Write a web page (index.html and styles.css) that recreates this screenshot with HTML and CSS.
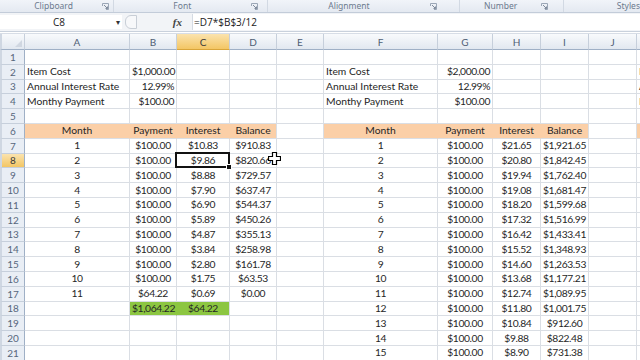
FILE: index.html
```html
<!DOCTYPE html>
<html lang="en">
<head>
    <meta charset="UTF-8">
    <meta name="viewport" content="width=device-width, initial-scale=1.0">
    <title>Loan Payments</title>
    <link rel="stylesheet" href="styles.css">
</head>
<body>
    <!-- Nombres de los grupos de la cinta -->
    <div class="ribbon-groups">
        <div class="group group-clipboard"><span class="group-label">Clipboard</span><svg class="launcher" viewBox="0 0 7 7"><path d="M0.5 3V0.5H6.5V6.5H4" fill="none" stroke="#9aa6b6"/><path d="M2 2L5.5 5.5M5.5 3.5V5.5H3.5" fill="none" stroke="#7f8b9c"/></svg></div>
        <div class="group group-font"><span class="group-label">Font</span><svg class="launcher" viewBox="0 0 7 7"><path d="M0.5 3V0.5H6.5V6.5H4" fill="none" stroke="#9aa6b6"/><path d="M2 2L5.5 5.5M5.5 3.5V5.5H3.5" fill="none" stroke="#7f8b9c"/></svg></div>
        <div class="group group-alignment"><span class="group-label">Alignment</span><svg class="launcher" viewBox="0 0 7 7"><path d="M0.5 3V0.5H6.5V6.5H4" fill="none" stroke="#9aa6b6"/><path d="M2 2L5.5 5.5M5.5 3.5V5.5H3.5" fill="none" stroke="#7f8b9c"/></svg></div>
        <div class="group group-number"><span class="group-label">Number</span><svg class="launcher" viewBox="0 0 7 7"><path d="M0.5 3V0.5H6.5V6.5H4" fill="none" stroke="#9aa6b6"/><path d="M2 2L5.5 5.5M5.5 3.5V5.5H3.5" fill="none" stroke="#7f8b9c"/></svg></div>
        <div class="group group-styles"><span class="group-label">Styles</span></div>
    </div>

    <!-- Barra de fórmulas -->
    <div class="formula-bar">
        <div class="name-box">C8<span class="name-drop">&#9662;</span></div>
        <div class="splitter"></div>
        <div class="fx">fx</div>
        <div class="formula">=D7*$B$3/12</div>
    </div>

    <!-- Hoja de cálculo -->
    <div class="sheet">
        <table class="grid">
            <colgroup>
                <col class="c-row"><col class="c-a"><col class="c-b"><col class="c-c"><col class="c-d"><col class="c-e">
                <col class="c-f"><col class="c-g"><col class="c-h"><col class="c-i"><col class="c-j"><col class="c-k">
            </colgroup>
            <thead>
                <tr>
                    <th class="corner"></th><th>A</th><th>B</th><th class="sel">C</th><th>D</th><th>E</th>
                    <th>F</th><th>G</th><th>H</th><th>I</th><th>J</th><th>K</th>
                </tr>
            </thead>
            <tbody>
                <tr><th>1</th><td></td><td></td><td></td><td></td><td></td><td></td><td></td><td></td><td></td><td></td><td></td></tr>
                <tr><th>2</th><td class="left">Item Cost</td><td class="right">$1,000.00</td><td></td><td></td><td></td><td class="left">Item Cost</td><td class="right">$2,000.00</td><td></td><td></td><td></td><td class="left">Item</td></tr>
                <tr><th>3</th><td class="left">Annual Interest Rate</td><td class="right">12.99%</td><td></td><td></td><td></td><td class="left">Annual Interest Rate</td><td class="right">12.99%</td><td></td><td></td><td></td><td class="left">Annual</td></tr>
                <tr><th>4</th><td class="left">Monthy Payment</td><td class="right">$100.00</td><td></td><td></td><td></td><td class="left">Monthy Payment</td><td class="right">$100.00</td><td></td><td></td><td></td><td class="left">Monthy</td></tr>
                <tr><th>5</th><td></td><td></td><td></td><td></td><td></td><td></td><td></td><td></td><td></td><td></td><td></td></tr>
                <tr class="titles"><th>6</th><td class="orange">Month</td><td class="orange">Payment</td><td class="orange">Interest</td><td class="orange end">Balance</td><td></td><td class="orange">Month</td><td class="orange">Payment</td><td class="orange">Interest</td><td class="orange end">Balance</td><td></td><td class="orange"></td></tr>
                <tr><th>7</th><td>1</td><td>$100.00</td><td>$10.83</td><td>$910.83</td><td></td><td>1</td><td>$100.00</td><td>$21.65</td><td>$1,921.65</td><td></td><td></td></tr>
                <tr><th class="sel">8</th><td>2</td><td>$100.00</td><td class="active">$9.86</td><td>$820.66</td><td></td><td>2</td><td>$100.00</td><td>$20.80</td><td>$1,842.45</td><td></td><td></td></tr>
                <tr><th>9</th><td>3</td><td>$100.00</td><td>$8.88</td><td>$729.57</td><td></td><td>3</td><td>$100.00</td><td>$19.94</td><td>$1,762.40</td><td></td><td></td></tr>
                <tr><th>10</th><td>4</td><td>$100.00</td><td>$7.90</td><td>$637.47</td><td></td><td>4</td><td>$100.00</td><td>$19.08</td><td>$1,681.47</td><td></td><td></td></tr>
                <tr><th>11</th><td>5</td><td>$100.00</td><td>$6.90</td><td>$544.37</td><td></td><td>5</td><td>$100.00</td><td>$18.20</td><td>$1,599.68</td><td></td><td></td></tr>
                <tr><th>12</th><td>6</td><td>$100.00</td><td>$5.89</td><td>$450.26</td><td></td><td>6</td><td>$100.00</td><td>$17.32</td><td>$1,516.99</td><td></td><td></td></tr>
                <tr><th>13</th><td>7</td><td>$100.00</td><td>$4.87</td><td>$355.13</td><td></td><td>7</td><td>$100.00</td><td>$16.42</td><td>$1,433.41</td><td></td><td></td></tr>
                <tr><th>14</th><td>8</td><td>$100.00</td><td>$3.84</td><td>$258.98</td><td></td><td>8</td><td>$100.00</td><td>$15.52</td><td>$1,348.93</td><td></td><td></td></tr>
                <tr><th>15</th><td>9</td><td>$100.00</td><td>$2.80</td><td>$161.78</td><td></td><td>9</td><td>$100.00</td><td>$14.60</td><td>$1,263.53</td><td></td><td></td></tr>
                <tr><th>16</th><td>10</td><td>$100.00</td><td>$1.75</td><td>$63.53</td><td></td><td>10</td><td>$100.00</td><td>$13.68</td><td>$1,177.21</td><td></td><td></td></tr>
                <tr><th>17</th><td>11</td><td>$64.22</td><td>$0.69</td><td>$0.00</td><td></td><td>11</td><td>$100.00</td><td>$12.74</td><td>$1,089.95</td><td></td><td></td></tr>
                <tr><th>18</th><td></td><td class="green">$1,064.22</td><td class="green end">$64.22</td><td></td><td></td><td>12</td><td>$100.00</td><td>$11.80</td><td>$1,001.75</td><td></td><td></td></tr>
                <tr><th>19</th><td></td><td></td><td></td><td></td><td></td><td>13</td><td>$100.00</td><td>$10.84</td><td>$912.60</td><td></td><td></td></tr>
                <tr><th>20</th><td></td><td></td><td></td><td></td><td></td><td>14</td><td>$100.00</td><td>$9.88</td><td>$822.48</td><td></td><td></td></tr>
                <tr><th>21</th><td></td><td></td><td></td><td></td><td></td><td>15</td><td>$100.00</td><td>$8.90</td><td>$731.38</td><td></td><td></td></tr>
                <tr><th>22</th><td></td><td></td><td></td><td></td><td></td><td></td><td></td><td></td><td></td><td></td><td></td></tr>
            </tbody>
        </table>

        <!-- Puntero del ratón -->
        <svg class="cursor" viewBox="0 0 13 13">
            <path d="M4.5 0.5H8.5V4.5H12.5V8.5H8.5V12.5H4.5V8.5H0.5V4.5H4.5Z" fill="#fff" stroke="#000" stroke-width="1.2"/>
        </svg>
    </div>
</body>
</html>
```

FILE: styles.css
```css
/* General */
body {
    margin: 0;
    width: 640px;
    height: 360px;
    overflow: hidden;
    background-color: #ffffff;
    font-family: Lato, "Open Sans", sans-serif;
}

/* Nombres de grupos de la cinta */
.ribbon-groups {
    display: flex;
    height: 12px;
    background: linear-gradient(#f1f4f9, #e4e9f1);
    border-bottom: 1px solid #c3ccd9;
    color: #6c7a8e;
    font-family: "Noto Sans", sans-serif;
    font-size: 8.5px;
    line-height: 12px;
}

.group {
    display: flex;
    align-items: center;
    border-right: 1px solid #d2d9e3;
    box-sizing: border-box;
}

.group-label {
    flex: 1;
    text-align: center;
}

.launcher {
    width: 7px;
    height: 7px;
    margin-right: 4px;
}

.group-clipboard {
    width: 116px;
    padding-left: 5px;
}

.group-font {
    width: 156px;
    padding-right: 5px;
}

.group-alignment {
    width: 196px;
    padding-right: 18px;
}

.group-number {
    width: 105px;
    padding-right: 11px;
}

.group-styles {
    flex: 1;
    border-right: none;
}

.group-styles .group-label {
    text-align: left;
    padding-left: 53px;
    white-space: nowrap;
}

/* Barra de fórmulas */
.formula-bar {
    display: flex;
    align-items: center;
    height: 18px;
    background-color: #f2f4f7;
    border-bottom: 1px solid #c9d1dc;
    margin-bottom: 1px;
    font-family: "Open Sans", sans-serif;
    font-size: 10px;
    color: #222;
}

.name-box {
    position: relative;
    width: 122px;
    height: 14px;
    line-height: 14px;
    background-color: #ffffff;
    text-align: center;
    box-sizing: border-box;
    padding-right: 4px;
}

.name-drop {
    position: absolute;
    right: 2px;
    top: 0;
    font-size: 8px;
    color: #333;
}

.splitter {
    width: 10px;
    height: 12px;
    margin-left: 3px;
    border: 1px solid #c8ced6;
    border-radius: 6px 0 0 6px;
    background-color: #f7f8fa;
}

.fx {
    width: 55px;
    text-align: right;
    padding-right: 10px;
    box-sizing: border-box;
    font-family: "Liberation Serif", serif;
    font-style: italic;
    font-weight: bold;
    font-size: 11px;
    color: #444;
}

.formula {
    flex: 1;
    height: 16px;
    line-height: 16px;
    padding-left: 1px;
    background-color: #ffffff;
    border-left: 1px solid #d5dbe3;
}

/* Hoja */
.sheet {
    position: relative;
    border-top: 1px solid #d7dde6;
}

.grid {
    table-layout: fixed;
    border-collapse: separate;
    border-spacing: 0;
    width: 667px;
    font-size: 10.3px;
    color: #262626;
}

.c-row { width: 25px; }
.c-a { width: 105px; }
.c-b { width: 47px; }
.c-c { width: 53px; }
.c-d { width: 47px; }
.c-e { width: 47px; }
.c-f { width: 114px; }
.c-g { width: 55px; }
.c-h { width: 48px; }
.c-i { width: 48px; }
.c-j { width: 48px; }
.c-k { width: 30px; }

/* Encabezados de columnas */
.grid thead th {
    height: 16px;
    padding: 0;
    box-sizing: border-box;
    background: linear-gradient(#f8fafc, #e2e8f0);
    border-right: 1px solid #c6cfdb;
    border-bottom: 1px solid #9fb0c6;
    color: #4f5e74;
    font-weight: normal;
    font-size: 10px;
    text-align: center;
}

.grid thead th.sel {
    background: linear-gradient(#fbe3ae, #f3c664);
    border-bottom-color: #d9a53a;
    color: #3a3a3a;
}

.grid thead th.corner {
    position: relative;
    border-left: 2px solid #cfd7e2;
}

.corner::after {
    content: "";
    position: absolute;
    right: 2px;
    bottom: 2px;
    border-left: 7px solid transparent;
    border-bottom: 7px solid #d0d7e1;
}

/* Encabezados de filas */
.grid tbody tr {
    height: 14.8px;
}

.grid tbody th {
    padding: 0;
    background-color: #e9eef5;
    border-left: 2px solid #cfd7e2;
    border-right: 1px solid #9fb0c6;
    border-bottom: 1px solid #c6cfdb;
    color: #56667c;
    font-weight: normal;
    font-size: 10px;
    text-align: center;
}

.grid tbody th.sel {
    background: linear-gradient(#fbe3ae, #f3c664);
    color: #3a3a3a;
}

/* Celdas */
.grid td {
    padding: 0 2px;
    border-right: 1px solid #dadee4;
    border-bottom: 1px solid #dadee4;
    text-align: center;
    white-space: nowrap;
    overflow: hidden;
    line-height: 13px;
    letter-spacing: -0.4px;
}

.grid td.left {
    text-align: left;
    overflow: visible;
    letter-spacing: 0;
}

.grid td.right {
    text-align: right;
}

.grid td.orange {
    background-color: #fbcfa7;
    border-right-color: #fbcfa7;
    letter-spacing: 0;
}

.grid td.green {
    background-color: #8cc641;
    border-right-color: #8cc641;
}

.grid td.end {
    border-right-color: #dadee4;
}

/* Celda activa */
.grid td.active {
    position: relative;
    overflow: visible;
}

.active::before {
    content: "";
    position: absolute;
    left: -2px;
    top: -2px;
    right: -1px;
    bottom: -1px;
    border: 2px solid #111;
}

.active::after {
    content: "";
    position: absolute;
    right: -3px;
    bottom: -3px;
    width: 4px;
    height: 4px;
    background-color: #111;
    border: 1px solid #fff;
}

/* Puntero */
.cursor {
    position: absolute;
    left: 268px;
    top: 118px;
    width: 13px;
    height: 13px;
}
```
